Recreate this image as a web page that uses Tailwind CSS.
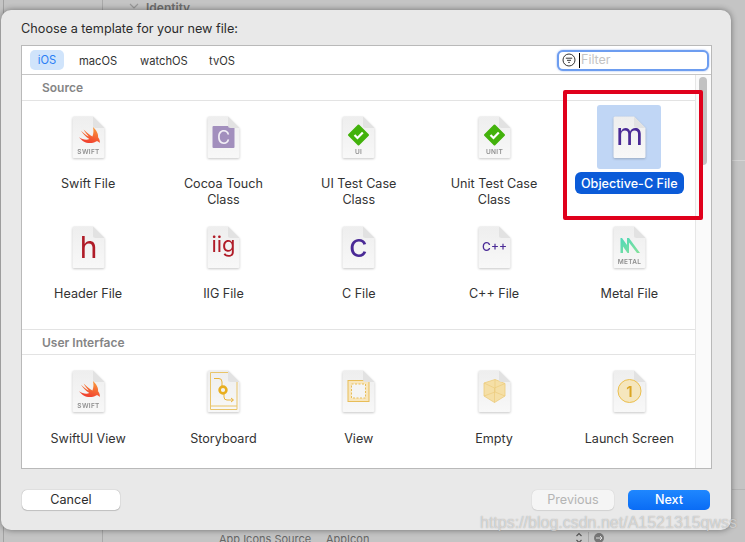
<!DOCTYPE html>
<html lang="en">
<head>
    <meta charset="UTF-8">
    <title>Choose a template</title>
    <script src="https://cdn.jsdelivr.net/npm/@tailwindcss/browser@4"></script>
</head>
<body class="bg-[#c4c4c4]">
    <!-- shared icon parts -->
    <svg class="absolute w-0 h-0">
        <defs>
            <linearGradient id="paper" x1="0" y1="0" x2="0" y2="1">
                <stop offset="0" stop-color="#eeeeee"/>
                <stop offset="1" stop-color="#f8f8f8"/>
            </linearGradient>
            <linearGradient id="swiftGrad" x1="0.7" y1="0" x2="0.3" y2="1">
                <stop offset="0" stop-color="#fa9a3a"/>
                <stop offset="1" stop-color="#f03a2e"/>
            </linearGradient>
            <linearGradient id="metalGrad" x1="0" y1="0" x2="1" y2="1">
                <stop offset="0" stop-color="#4fd8b8"/>
                <stop offset="1" stop-color="#86e29a"/>
            </linearGradient>
            <symbol id="doc" viewBox="0 0 33 43">
                <path d="M2 0.5H21L32.5 12V40.5a1.5 1.5 0 0 1-1.5 1.5H2a1.5 1.5 0 0 1-1.5-1.5V2A1.5 1.5 0 0 1 2 0.5Z" fill="url(#paper)"/>
            </symbol>
            <symbol id="fold" viewBox="0 0 33 43">
                <path d="M21 0.5L32.5 12H23.5a2.5 2.5 0 0 1-2.5-2.5Z" fill="#e2e2e2"/>
            </symbol>
            <symbol id="swift" viewBox="0 0 33 43">
                <g transform="translate(6 10) scale(1.03)">
                    <path d="M14.5 1C18 4 20 8 19.5 11C21 13 21.5 15 21 16.5C20 15 18.5 14.5 17.5 15C14 17 9 17 5.5 15C3.5 13.8 2 12.3 1 11C4 13 8 14 11 12.7C7.5 10.3 4.5 7 2.8 4.5C5.5 7 8.5 9.3 10.5 10.3C8.5 8.2 6.5 5.5 5.5 3.5C8 6.3 11.5 9 14 10.3C15.2 7.5 15.3 4 14.5 1Z" fill="url(#swiftGrad)"/>
                </g>
            </symbol>
            <symbol id="check" viewBox="0 0 33 43">
                <path d="M16.5 9.5L26 19L16.5 28.5L7 19Z" fill="#43b20c" stroke="#43b20c" stroke-width="2" stroke-linejoin="round"/>
                <path d="M12.5 19L15.5 22L20.8 16.5" fill="none" stroke="#fff" stroke-width="2.2"/>
            </symbol>
        </defs>
    </svg>

    <div class="relative w-[745px] h-[542px] overflow-hidden font-['Inter',sans-serif]">
        <!-- window behind the sheet -->
        <div class="absolute left-[3px] top-0 h-full w-px bg-[#a2a2a2]"></div>
        <div class="absolute left-[102px] top-0 h-full w-px bg-[#a9a9a9]"></div>
        <div class="absolute left-[146px] -top-[1px] text-[12px] font-semibold text-[#6e6e6e]">Identity</div>
        <svg class="absolute left-[129px] top-[3px]" width="10" height="6" viewBox="0 0 10 6"><path d="M1 1L5 5L9 1" fill="none" stroke="#999" stroke-width="1.2"/></svg>
        <div class="absolute left-[219px] top-[531px] text-[11px] text-[#666]">App Icons Source</div>
        <div class="absolute left-[326px] top-[531px] text-[11px] text-[#666]">AppIcon</div>
        <div class="absolute left-[732px] top-[160px] w-[13px] h-px bg-[#d4d4d4]"></div>
        <div class="absolute left-[732px] top-[489px] w-[13px] h-px bg-[#b4b4b4]"></div>
        <svg class="absolute left-[576px] top-[532px]" width="30" height="12" viewBox="0 0 30 12">
            <path d="M0.5 4L3 1.5L5.5 4M0.5 8L3 10.5L5.5 8" fill="none" stroke="#555" stroke-width="1.2"/>
            <path d="M12.5 0V12" stroke="#a8a8a8" stroke-width="1"/>
            <circle cx="23" cy="6" r="5" fill="#777"/>
            <path d="M20 6H26M24 4L26 6L24 8" fill="none" stroke="#ddd" stroke-width="1"/>
        </svg>

        <!-- sheet -->
        <div class="absolute left-[1px] top-[10px] w-[730px] h-[520px] bg-[#e9e9e9] rounded-[10px] shadow-[0_0_6px_rgba(0,0,0,0.45)] flex flex-col">
            <h1 class="pl-[20px] pt-[11px] h-[35px] text-[12.7px] leading-4 text-[#2c2c2c]">Choose a template for your new file:</h1>

            <div class="ml-[20px] w-[691px] h-[424px] border border-[#b9b9b9] bg-white flex flex-col overflow-hidden">
                <!-- tabs + filter -->
                <div class="h-[29px] shrink-0 border-b border-[#c6c6c6] flex items-center pl-[8px] pr-[2px] text-[11.2px] text-[#333]">
                    <span class="w-[34px] h-[20px] pt-px rounded-[5px] bg-[#d0e4fb] text-[#2a7ef5] flex items-center justify-center">iOS</span>
                    <span class="ml-[15px] pt-[2px] w-[38px] text-center">macOS</span>
                    <span class="ml-[23px] pt-[2px] w-[46px] text-center">watchOS</span>
                    <span class="ml-[23px] pt-[2px] w-[26px] text-center">tvOS</span>
                    <div class="ml-auto w-[152px] h-[21px] rounded-[6px] border-[2px] border-[#6d9df0] bg-white shadow-[0_0_2px_rgba(80,130,230,0.7)] flex items-center pl-[3px]">
                        <svg width="14" height="14" viewBox="0 0 14 14">
                            <circle cx="7" cy="7" r="6" fill="none" stroke="#333" stroke-width="1"/>
                            <path d="M3.8 5.2H10.2M5 7.3H9M6.2 9.4H7.8" stroke="#333" stroke-width="1"/>
                        </svg>
                        <span class="ml-[3px] w-px h-[15px] bg-black"></span>
                        <span class="ml-px pt-px text-[12.5px] text-[#c4c4c4]">Filter</span>
                    </div>
                </div>

                <div class="flex-1 flex min-h-0">
                    <div class="w-[673px] shrink-0 min-w-0">
                        <div class="h-[26px] border-b border-[#e3e3e3] pl-[20px] pt-[5px] text-[12px] leading-4 font-semibold text-[#858585]">Source</div>

                        <div class="grid grid-cols-[repeat(5,135.3px)] -ml-[1.5px] pt-[4px] text-[12.6px] leading-4 text-[#333] text-center">
                            <!-- row 1 -->
                            <div class="h-[110px] flex flex-col items-center">
                                <div class="w-16 h-16 flex items-center justify-center">
                                    <svg class="drop-shadow-[0_1px_1px_rgba(0,0,0,0.22)]" width="33" height="43" viewBox="0 0 33 43">
                                        <use href="#doc"/><use href="#fold"/><use href="#swift"/>
                                        <text x="16.5" y="38" text-anchor="middle" font-family="Inter" font-size="6.5" letter-spacing="0.3" font-weight="600" fill="#8e8e8e">SWIFT</text>
                                    </svg>
                                </div>
                                <div class="mt-[3px] px-[4px] pt-[4px] pb-[2px]">Swift File</div>
                            </div>
                            <div class="h-[110px] flex flex-col items-center">
                                <div class="w-16 h-16 flex items-center justify-center">
                                    <svg class="drop-shadow-[0_1px_1px_rgba(0,0,0,0.22)]" width="33" height="43" viewBox="0 0 33 43">
                                        <use href="#doc"/>
                                        <rect x="5.5" y="10" width="22" height="22" rx="1" fill="#a28fbd"/>
                                        <use href="#fold"/>
                                        <text x="16.5" y="27.8" text-anchor="middle" font-family="Inter" font-size="18" fill="#f2eff6">C</text>
                                    </svg>
                                </div>
                                <div class="mt-[3px] px-[4px] pt-[4px] pb-[2px]">Cocoa Touch<br>Class</div>
                            </div>
                            <div class="h-[110px] flex flex-col items-center">
                                <div class="w-16 h-16 flex items-center justify-center">
                                    <svg class="drop-shadow-[0_1px_1px_rgba(0,0,0,0.22)]" width="33" height="43" viewBox="0 0 33 43">
                                        <use href="#doc"/><use href="#fold"/><use href="#check"/>
                                        <text x="16.5" y="38" text-anchor="middle" font-family="Inter" font-size="6.5" letter-spacing="0.3" font-weight="600" fill="#8e8e8e">UI</text>
                                    </svg>
                                </div>
                                <div class="mt-[3px] px-[4px] pt-[4px] pb-[2px]">UI Test Case<br>Class</div>
                            </div>
                            <div class="h-[110px] flex flex-col items-center">
                                <div class="w-16 h-16 flex items-center justify-center">
                                    <svg class="drop-shadow-[0_1px_1px_rgba(0,0,0,0.22)]" width="33" height="43" viewBox="0 0 33 43">
                                        <use href="#doc"/><use href="#fold"/><use href="#check"/>
                                        <text x="16.5" y="38" text-anchor="middle" font-family="Inter" font-size="6.5" letter-spacing="0.3" font-weight="600" fill="#8e8e8e">UNIT</text>
                                    </svg>
                                </div>
                                <div class="mt-[3px] px-[4px] pt-[4px] pb-[2px]">Unit Test Case<br>Class</div>
                            </div>
                            <div class="h-[110px] flex flex-col items-center">
                                <div class="w-16 h-16 rounded-[3px] bg-[#c0d6f5] flex items-center justify-center">
                                    <svg class="drop-shadow-[0_1px_1px_rgba(0,0,0,0.22)]" width="33" height="43" viewBox="0 0 33 43">
                                        <use href="#doc"/><use href="#fold"/>
                                        <text x="16.5" y="29" text-anchor="middle" font-family="Inter" font-size="31" fill="#4a2a96">m</text>
                                    </svg>
                                </div>
                                <div class="mt-[3px] px-[6px] pt-[4px] pb-[2px] rounded-[6px] bg-[#0b5bd8] text-white font-medium">Objective-C File</div>
                            </div>

                            <!-- row 2 -->
                            <div class="h-[110px] flex flex-col items-center">
                                <div class="w-16 h-16 flex items-center justify-center">
                                    <svg class="drop-shadow-[0_1px_1px_rgba(0,0,0,0.22)]" width="33" height="43" viewBox="0 0 33 43">
                                        <use href="#doc"/><use href="#fold"/>
                                        <text x="16.5" y="32" text-anchor="middle" font-family="Inter" font-size="30" fill="#b01c28">h</text>
                                    </svg>
                                </div>
                                <div class="mt-[3px] px-[4px] pt-[4px] pb-[2px]">Header File</div>
                            </div>
                            <div class="h-[110px] flex flex-col items-center">
                                <div class="w-16 h-16 flex items-center justify-center">
                                    <svg class="drop-shadow-[0_1px_1px_rgba(0,0,0,0.22)]" width="33" height="43" viewBox="0 0 33 43">
                                        <use href="#doc"/><use href="#fold"/>
                                        <text x="16.5" y="25.5" text-anchor="middle" font-family="Inter" font-size="22" fill="#b01c28">iig</text>
                                    </svg>
                                </div>
                                <div class="mt-[3px] px-[4px] pt-[4px] pb-[2px]">IIG File</div>
                            </div>
                            <div class="h-[110px] flex flex-col items-center">
                                <div class="w-16 h-16 flex items-center justify-center">
                                    <svg class="drop-shadow-[0_1px_1px_rgba(0,0,0,0.22)]" width="33" height="43" viewBox="0 0 33 43">
                                        <use href="#doc"/><use href="#fold"/>
                                        <text x="16.5" y="30.5" text-anchor="middle" font-family="Inter" font-size="33" fill="#4a2a96">c</text>
                                    </svg>
                                </div>
                                <div class="mt-[3px] px-[4px] pt-[4px] pb-[2px]">C File</div>
                            </div>
                            <div class="h-[110px] flex flex-col items-center">
                                <div class="w-16 h-16 flex items-center justify-center">
                                    <svg class="drop-shadow-[0_1px_1px_rgba(0,0,0,0.22)]" width="33" height="43" viewBox="0 0 33 43">
                                        <use href="#doc"/><use href="#fold"/>
                                        <text x="16.5" y="25" text-anchor="middle" font-family="Inter" font-size="12" font-weight="500" fill="#4a2a96">C++</text>
                                    </svg>
                                </div>
                                <div class="mt-[3px] px-[4px] pt-[4px] pb-[2px]">C++ File</div>
                            </div>
                            <div class="h-[110px] flex flex-col items-center">
                                <div class="w-16 h-16 flex items-center justify-center">
                                    <svg class="drop-shadow-[0_1px_1px_rgba(0,0,0,0.22)]" width="33" height="43" viewBox="0 0 33 43">
                                        <use href="#doc"/><use href="#fold"/>
                                        <path d="M7.5 12H9L14 19V12H16L27 27H24L16 16.5V27H14.5L10 20.5V27H7.5Z" fill="url(#metalGrad)"/>
                                        <text x="16.5" y="38" text-anchor="middle" font-family="Inter" font-size="6.5" letter-spacing="0.3" font-weight="600" fill="#8e8e8e">METAL</text>
                                    </svg>
                                </div>
                                <div class="mt-[3px] px-[4px] pt-[4px] pb-[2px]">Metal File</div>
                            </div>
                        </div>

                        <div class="mt-[4px] border-t border-[#e3e3e3] h-[26px] border-b pl-[20px] pt-[5px] text-[12px] leading-4 font-semibold text-[#858585]">User Interface</div>

                        <div class="grid grid-cols-[repeat(5,135.3px)] -ml-[1.5px] pt-[4px] text-[12.6px] leading-4 text-[#333] text-center">
                            <!-- row 3 -->
                            <div class="h-[108px] flex flex-col items-center">
                                <div class="w-16 h-16 flex items-center justify-center">
                                    <svg class="drop-shadow-[0_1px_1px_rgba(0,0,0,0.22)]" width="33" height="43" viewBox="0 0 33 43">
                                        <use href="#doc"/><use href="#fold"/><use href="#swift"/>
                                        <text x="16.5" y="38" text-anchor="middle" font-family="Inter" font-size="6.5" letter-spacing="0.3" font-weight="600" fill="#8e8e8e">SWIFT</text>
                                    </svg>
                                </div>
                                <div class="mt-[4px] px-[4px] pt-[4px] pb-[2px]">SwiftUI View</div>
                            </div>
                            <div class="h-[108px] flex flex-col items-center">
                                <div class="w-16 h-16 flex items-center justify-center">
                                    <svg class="drop-shadow-[0_1px_1px_rgba(0,0,0,0.22)]" width="33" height="43" viewBox="0 0 33 43">
                                        <use href="#doc"/>
                                        <path d="M3.5 2.5H21M3.5 2.5V39.5H30V12M3.5 36H30" fill="none" stroke="#e9c468" stroke-width="1"/>
                                        <use href="#fold"/>
                                        <path d="M7 8.5H12Q15 8.5 15 12V16M17 24V27Q17 30 20 30H26M24 28L26.5 30L24 32" fill="none" stroke="#e9b33a" stroke-width="1"/>
                                        <circle cx="16" cy="20" r="3.4" fill="none" stroke="#e8ae1f" stroke-width="2.6"/>
                                    </svg>
                                </div>
                                <div class="mt-[4px] px-[4px] pt-[4px] pb-[2px]">Storyboard</div>
                            </div>
                            <div class="h-[108px] flex flex-col items-center">
                                <div class="w-16 h-16 flex items-center justify-center">
                                    <svg class="drop-shadow-[0_1px_1px_rgba(0,0,0,0.22)]" width="33" height="43" viewBox="0 0 33 43">
                                        <use href="#doc"/>
                                        <rect x="6" y="10.5" width="21" height="21" fill="#f8e6bd" stroke="#e8bd58" stroke-width="1"/>
                                        <rect x="9.5" y="14" width="14" height="14" fill="#f4f4f4" stroke="#e8bd58" stroke-width="1" stroke-dasharray="2 1.5"/>
                                        <use href="#fold"/>
                                    </svg>
                                </div>
                                <div class="mt-[4px] px-[4px] pt-[4px] pb-[2px]">View</div>
                            </div>
                            <div class="h-[108px] flex flex-col items-center">
                                <div class="w-16 h-16 flex items-center justify-center">
                                    <svg class="drop-shadow-[0_1px_1px_rgba(0,0,0,0.22)]" width="33" height="43" viewBox="0 0 33 43">
                                        <use href="#doc"/>
                                        <path d="M6 13L17 9.5L27 13.5V26L16.5 32.5L6 26Z" fill="#f5dfa6" stroke="#eccb7c" stroke-width="0.8"/>
                                        <path d="M6 13L16.5 18L27 13.5M16.5 18V32.5M17 9.5V22M6 26L17 22L27 26" fill="none" stroke="#eccb7c" stroke-width="0.7"/>
                                        <use href="#fold"/>
                                    </svg>
                                </div>
                                <div class="mt-[4px] px-[4px] pt-[4px] pb-[2px]">Empty</div>
                            </div>
                            <div class="h-[108px] flex flex-col items-center">
                                <div class="w-16 h-16 flex items-center justify-center">
                                    <svg class="drop-shadow-[0_1px_1px_rgba(0,0,0,0.22)]" width="33" height="43" viewBox="0 0 33 43">
                                        <use href="#doc"/><use href="#fold"/>
                                        <circle cx="16.5" cy="21" r="11.5" fill="#f5e6bd" stroke="#ebbf4f" stroke-width="1"/>
                                        <text x="16.5" y="26.5" text-anchor="middle" font-family="Inter" font-size="15" font-weight="600" fill="#dba522">1</text>
                                    </svg>
                                </div>
                                <div class="mt-[4px] px-[4px] pt-[4px] pb-[2px]">Launch Screen</div>
                            </div>
                        </div>
                    </div>

                    <!-- scroller -->
                    <div class="flex-1 border-l border-[#e6e6e6] bg-[#fafafa] pl-[3px] pt-[2px]">
                        <div class="w-[8px] h-[88px] rounded-full bg-[#c2c2c2]"></div>
                    </div>
                </div>
            </div>

            <!-- footer buttons -->
            <div class="flex items-start mt-[21px] pl-[21px] text-[12.6px] leading-5">
                <button class="w-[98px] h-[20px] rounded-[5px] bg-white text-[#2c2c2c] shadow-[0_0_1px_rgba(0,0,0,0.4),0_1px_1px_rgba(0,0,0,0.15)]">Cancel</button>
                <button class="ml-[412px] w-[82px] h-[20px] rounded-[5px] bg-[#f5f5f5] text-[#b4b4b4] shadow-[0_0_1px_rgba(0,0,0,0.2),0_1px_1px_rgba(0,0,0,0.08)]">Previous</button>
                <button class="ml-[14px] w-[82px] h-[20px] rounded-[5px] bg-gradient-to-b from-[#1f87ff] to-[#0a6cf5] text-white font-medium">Next</button>
            </div>
        </div>

        <!-- red annotation -->
        <div class="absolute left-[563px] top-[90px] w-[140px] h-[130px] border-[4px] border-[#e0001c] rounded-[2px]"></div>

        <!-- watermark -->
        <div class="absolute left-[480px] top-[513px] text-[16px] leading-5 text-white/55 [text-shadow:0_0_1px_rgba(90,90,90,0.6)] font-['Liberation_Sans',sans-serif]">https://blog.csdn.net/A1521315qwss</div>
    </div>
</body>
</html>
